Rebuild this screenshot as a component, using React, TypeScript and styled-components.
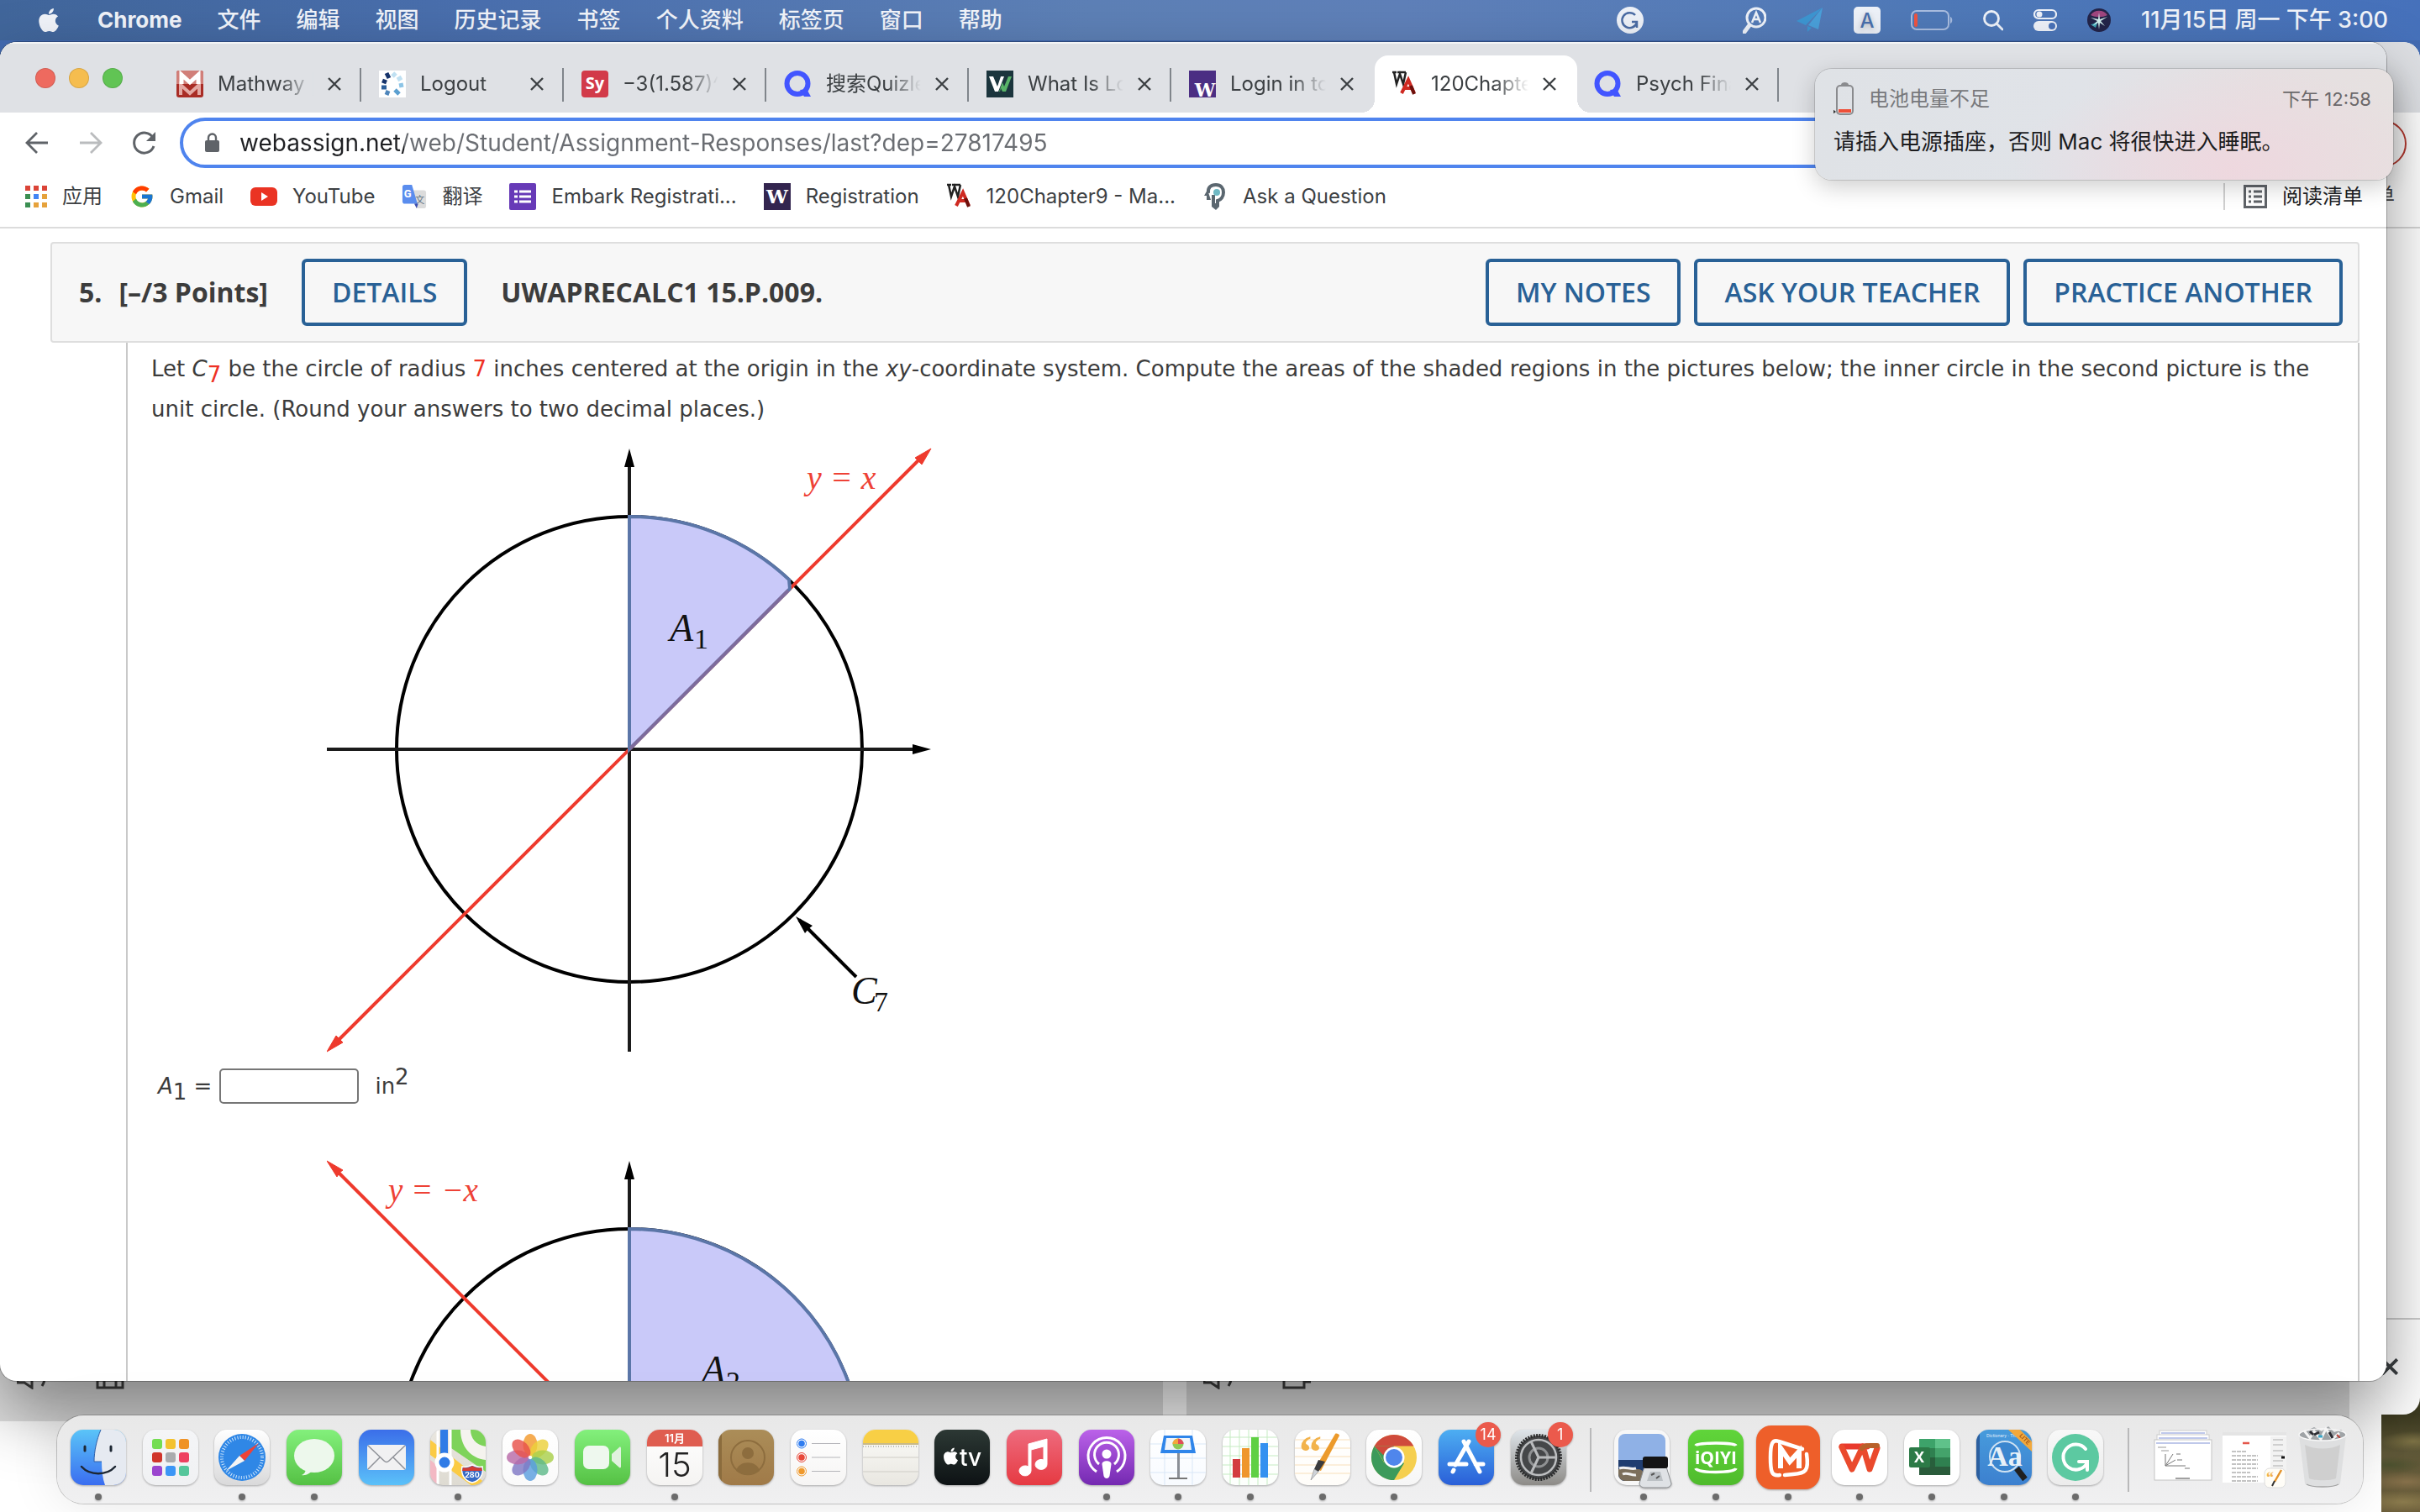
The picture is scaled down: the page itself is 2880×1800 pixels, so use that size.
import React from 'react';
import styled, { createGlobalStyle, css } from 'styled-components';
import { FaApple } from 'react-icons/fa';
import { FcGoogle } from 'react-icons/fc';

const UI = `Inter, "Noto Sans CJK SC", sans-serif`;
const READ = `"DejaVu Sans", "Noto Sans CJK SC", sans-serif`;
const HEAD = `"Open Sans", "Noto Sans CJK SC", sans-serif`;
const MATH = `"Liberation Serif", serif`;

const GlobalStyle = createGlobalStyle`
  * { box-sizing: border-box; }
  body { margin: 0; font-family: ${UI}; }
  button { font: inherit; color: inherit; background: none; border: 0; padding: 0; cursor: pointer; }
  a { color: inherit; text-decoration: none; }
  svg { display: block; flex: none; }
`;

/* ---------- desktop ---------- */

const Desktop = styled.div`
  position: relative;
  height: 100vh;
  overflow: hidden;
  background:
    radial-gradient(60px 14px at calc(100% - 20px) calc(100% - 12px), #8a7a4c, transparent),
    radial-gradient(40px 12px at calc(100% - 8px) calc(100% - 84px), #7d7245, transparent),
    radial-gradient(40px 10px at calc(100% - 36px) calc(100% - 56px), #4d5230, transparent),
    radial-gradient(50px 12px at calc(100% - 16px) calc(100% - 36px), #86704a, transparent),
    linear-gradient(#3f66ae 0, #4a76bd 200px, #3c3a20 calc(100% - 116px), #5f5838 calc(100% - 70px), #6a5c3a);
`;

const MenuBar = styled.nav`
  position: relative;
  height: 48px;
  display: flex;
  align-items: center;
  justify-content: space-between;
  padding: 0 38px 0 42px;
  color: #f1f4fa;
  font-size: 26px;
  line-height: 32px;
  font-weight: 500;
  text-shadow: 0 2px 6px rgba(0, 0, 0, 0.25);
  background: linear-gradient(90deg, #41669b, #4a6fae 20%, #5d80b6 45%, #5f80b9 58%, #4f79b8 80%, #4671bb);
`;

const MenuGroup = styled.div<{ $gap: number }>`
  display: flex;
  align-items: center;
  gap: ${(p) => p.$gap}px;
`;

const MenuItem = styled.button<{ $strong?: boolean }>`
  white-space: nowrap;
  font-weight: ${(p) => (p.$strong ? 700 : 500)};
`;
const Clock = styled.button`
  font-size: 27px;
  white-space: nowrap;
`;

const Spacer = styled.span`
  width: 46px;
`;

/* ---------- windows ---------- */

const BackWindow = styled.div`
  position: absolute;
  inset: 50px 0 116px 0;
  background: #fff;
  border-radius: 20px;
  overflow: hidden;
  display: flex;
  flex-direction: column;
`;
const BackTabs = styled.div`
  height: 84px;
  background: #dfe1e5;
`;
const BackTools = styled.div`
  height: 138px;
  display: flex;
  flex-direction: column;
  align-items: flex-end;
  gap: 18px;
  padding: 9px 16px 0;
  border-bottom: 2px solid #d5d5d5;
`;
const BackPill = styled.span`
  width: 120px;
  height: 56px;
  border: 2px solid #b83a30;
  border-radius: 28px;
`;
const BackText = styled.span`
  font-size: 24px;
  line-height: 32px;
  padding-right: 14px;
  color: #444;
`;
const BackFooter = styled.div`
  margin-top: auto;
  height: 115px;
  border-top: 2px solid #ccc;
  display: flex;
  justify-content: flex-end;
  padding: 46px 26px 0;
`;

const LowerWindow = styled.div`
  position: absolute;
  left: 0;
  right: 46px;
  bottom: 0;
  height: 600px;
  background: #fff;
  display: flex;
  align-items: flex-start;
  gap: 28px;
  padding-right: 38px;
`;
const LowerPanel = styled.div`
  flex: 1;
  height: 492px;
  background: #dfdfdf;
  display: flex;
  align-items: flex-end;
  gap: 60px;
  padding: 0 20px 38px;
`;

const BrowserWindow = styled.main`
  position: absolute;
  inset: 50px 40px 156px 0;
  background: #fff;
  border-radius: 20px;
  box-shadow: 0 0 0 1px rgba(0, 0, 0, 0.25), 0 36px 80px rgba(0, 0, 0, 0.42);
`;
const Clip = styled.div`
  height: 100%;
  border-radius: 20px;
  overflow: hidden;
  display: flex;
  flex-direction: column;
`;

const TabStrip = styled.div`
  flex: none;
  height: 84px;
  background: #dfe1e5;
  display: flex;
  align-items: flex-end;
  box-shadow: inset 0 2px 0 #f3f4f6;
`;
const Lights = styled.div`
  flex: none;
  width: 190px;
  height: 68px;
  display: flex;
  align-items: center;
  gap: 16px;
  padding: 0 0 14px 42px;
`;
const Light = styled.button<{ $c: string }>`
  width: 24px;
  height: 24px;
  border-radius: 50%;
  background: ${(p) => p.$c};
  box-shadow: inset 0 0 0 1px rgba(0, 0, 0, 0.12);
`;
const TabBox = styled.div<{ $active?: boolean; $line?: boolean }>`
  position: relative;
  flex: 0 1 241px;
  min-width: 0;
  height: 68px;
  display: flex;
  align-items: center;
  padding: 0 25px 0 20px;
  gap: 17px;
  font-size: 24px;
  line-height: 32px;
  color: #3c4043;
  background: linear-gradient(#80858b, #80858b) right 1px top 15px / ${(p) => (p.$line ? '2px 40px' : '0 0')} no-repeat;
  ${(p) =>
    p.$active &&
    css`
      background: #fff;
      border-radius: 16px 16px 0 0;
      &::before,
      &::after {
        content: '';
        position: absolute;
        bottom: 0;
        width: 16px;
        height: 16px;
      }
      &::before {
        right: 100%;
        background: radial-gradient(circle at 0 0, transparent 16px, #fff 16px);
      }
      &::after {
        left: 100%;
        background: radial-gradient(circle at 100% 0, transparent 16px, #fff 16px);
      }
    `}
`;
const TabTitle = styled.span`
  flex: 1;
  min-width: 0;
  overflow: hidden;
  white-space: nowrap;
  mask-image: linear-gradient(90deg, #000 65%, transparent);
`;

const Toolbar = styled.div`
  flex: none;
  height: 72px;
  display: flex;
  align-items: center;
  gap: 36px;
  padding: 0 130px 0 30px;
`;
const Omnibox = styled.label`
  flex: 1;
  height: 60px;
  margin-left: -8px;
  display: flex;
  align-items: center;
  gap: 24px;
  padding: 0 26px;
  border: 4px solid #4f84ee;
  border-radius: 30px;
`;
const UrlInput = styled.input`
  flex: 1;
  min-width: 0;
  border: 0;
  outline: 0;
  padding: 0;
  font-family: ${UI};
  font-size: 28px;
  line-height: 36px;
  height: 36px;
  color: #5f6368;
  background: linear-gradient(90deg, #202124 196px, #6a6d72 196px);
  background-clip: text;
  -webkit-text-fill-color: transparent;
`;

const Bookmarks = styled.div`
  flex: none;
  height: 66px;
  display: flex;
  align-items: center;
  justify-content: space-between;
  padding: 0 28px 8px 28px;
  border-bottom: 2px solid #dcdcdc;
  color: #3c4043;
  font-size: 24px;
  line-height: 32px;
`;
const BookmarkList = styled.div`
  display: flex;
  gap: 32px;
`;
const Bookmark = styled.a`
  display: flex;
  align-items: center;
  gap: 18px;
  white-space: nowrap;
`;
const ReadingList = styled.button`
  display: flex;
  align-items: center;
  gap: 18px;
  padding-left: 22px;
  border-left: 2px solid #d0d0d0;
  color: #202124;
`;

/* ---------- question ---------- */

const Question = styled.section`
  flex: none;
  margin: 16px 32px 0 60px;
  color: #3c3c3c;
`;
const QuestionBar = styled.header`
  height: 120px;
  display: flex;
  align-items: center;
  justify-content: space-between;
  padding: 0 18px 0 32px;
  background: #f7f7f7;
  border: 2px solid #dedede;
  border-radius: 4px;
  font-family: ${HEAD};
  font-size: 32px;
  line-height: 44px;
`;
const BarGroup = styled.div<{ $gap: number }>`
  display: flex;
  align-items: center;
  gap: ${(p) => p.$gap}px;
`;
const BarTitle = styled.h2`
  display: flex;
  gap: 20px;
  margin: 0;
  font-size: 32px;
  line-height: 44px;
  font-weight: 700;
`;
const Outline = styled.button`
  height: 80px;
  padding: 0 32px;
  border: 4px solid #296196;
  border-radius: 6px;
  color: #296196;
  font-weight: 600;
  white-space: nowrap;
`;
const QuestionBody = styled.div`
  margin-left: 90px;
  min-height: 1300px;
  padding: 7px 28px 0;
  border: solid #c9c9c9;
  border-width: 0 2px;
  font-family: ${READ};
  font-size: 26px;
  line-height: 48px;
`;
const Prompt = styled.p`
  margin: 0;
`;
const Red = styled.span`
  color: #ee3124;
`;
const Sub = styled.sub`
  font-size: 26px;
  line-height: 0;
  vertical-align: -7px;
`;
const Sup = styled.sup`
  font-size: 26px;
  line-height: 0;
  vertical-align: 11px;
`;
const Figure = styled.figure<{ $top: number }>`
  margin: ${(p) => p.$top}px 0 0 209px;
`;
const AnswerRow = styled.div`
  display: flex;
  align-items: center;
  gap: 9px;
  margin: 19px 0 0 8px;
  height: 42px;
`;
const AnswerInput = styled.input`
  width: 166px;
  height: 42px;
  border: 2px solid #767676;
  border-radius: 5px;
  padding: 2px 8px;
  font-family: ${READ};
  font-size: 26px;
`;
const Unit = styled.span`
  padding-left: 10px;
`;

/* ---------- notification ---------- */

const Notice = styled.aside`
  position: absolute;
  top: 82px;
  right: 32px;
  width: 688px;
  height: 132px;
  padding: 15px 26px 0 22px;
  border-radius: 20px;
  background:
    radial-gradient(260px 120px at 72% 90%, rgba(240, 214, 222, 0.8), transparent),
    linear-gradient(100deg, #dfe2e6, #e0e3e8 45%, #e6dfe1 75%, #e6e1e0);
  box-shadow: 0 0 0 1px rgba(0, 0, 0, 0.14), 0 8px 28px rgba(0, 0, 0, 0.2);
`;
const NoticeHead = styled.div`
  display: flex;
  align-items: center;
  gap: 18px;
  height: 42px;
  font-size: 24px;
  line-height: 32px;
  color: #77787b;
`;
const NoticeTime = styled.time`
  margin-left: auto;
  font-size: 22px;
  color: #6b686a;
`;
const NoticeText = styled.p`
  margin: 12px 0 0;
  font-size: 26px;
  line-height: 36px;
  color: #1c1c1e;
  white-space: nowrap;
`;

/* ---------- dock ---------- */

const DockBar = styled.nav`
  position: absolute;
  left: 68px;
  right: 68px;
  bottom: 10px;
  height: 105px;
  display: flex;
  justify-content: space-between;
  align-items: flex-start;
  padding: 17px 18px 0 16px;
  border-radius: 32px;
  background: linear-gradient(#e8e8e8, #f0f0f1);
  box-shadow: 0 0 0 1px rgba(0, 0, 0, 0.2), 0 0 60px rgba(0, 0, 0, 0.1);
`;
const DockItem = styled.button<{ $on?: boolean }>`
  position: relative;
  width: 66px;
  height: 84px;
  display: flex;
  flex-direction: column;
  align-items: center;
  justify-content: space-between;
  filter: drop-shadow(0 1px 1px rgba(0, 0, 0, 0.3));
  &::after {
    content: '';
    width: 8px;
    height: 8px;
    border-radius: 50%;
    background: ${(p) => (p.$on ? '#6b6b6b' : 'transparent')};
  }
`;
const Badge = styled.span`
  position: absolute;
  top: -9px;
  right: -8px;
  width: 30px;
  height: 30px;
  border-radius: 50%;
  background: #eb5a4c;
  color: #fff;
  font-size: 18px;
  line-height: 30px;
  text-align: center;
`;
const DockLine = styled.span`
  width: 2px;
  height: 76px;
  margin: -2px 9px 0;
  background: #b9b9ba;
`;
const DockFiles = styled.div`
  display: flex;
  gap: 12px;
`;

/* ---------- drawings ---------- */

const Close = ({ s = 16, w = 2.4 }: { s?: number; w?: number }) => (
  <svg width={s} height={s} viewBox="0 0 16 16" stroke="#3c4043" strokeWidth={w} fill="none">
    <path d="M1 1l14 14M15 1L1 15" />
  </svg>
);

const QuizletMark = () => (
  <svg width="33" height="32" viewBox="0 0 33 32">
    <circle cx="16" cy="15.500" r="12.500" fill="none" stroke="#4255ff" strokeWidth="6" />
    <path d="M19 23l8-1 5 9h-8z" fill="#4255ff" />
  </svg>
);

const WAMark = () => (
  <svg width="30" height="32" viewBox="0 0 30 32">
    <path d="M1 2h5M7 2h5M12 2h5M3 2l3 14L10 4l4 12L17 2" fill="none" stroke="#222" strokeWidth="2.500" />
    <path d="M12 27l8-16 7 16M14 21h10" fill="none" stroke="#cf2a22" strokeWidth="4" />
    <path d="M23 18l4 10" stroke="#6e100c" strokeWidth="4" />
  </svg>
);

const tabIcons: Record<string, React.ReactNode> = {
  mathway: (
    <svg width="32" height="32" viewBox="0 0 32 32">
      <rect width="32" height="32" rx="3" fill="#a92c25" />
      <path d="M0 3a3 3 0 013-3h26a3 3 0 013 3v13H0z" fill="#d17f79" />
      <path d="M5 29V17l11 10 11-10v12" fill="none" stroke="#e4a9a4" strokeWidth="4" />
      <path d="M6 16V5l10 9 10-9v11" fill="none" stroke="#fff" strokeWidth="5" />
    </svg>
  ),
  logout: (
    <svg width="32" height="32" viewBox="0 0 32 32">
      <rect width="32" height="32" fill="#fff" />
      <g fill="none" strokeWidth="5">
        <path d="M16 7l4-4" stroke="#bfe0f2" />
        <path d="M22 11l5-3" stroke="#bfe0f2" />
        <path d="M24 18l5-1" stroke="#8cc4e6" />
        <path d="M19 23l5 5" stroke="#5a9fd0" />
        <path d="M11 24l-2 5" stroke="#4f86bb" />
        <path d="M3 20h6" stroke="#2c5f9b" />
        <path d="M4 12l5 2" stroke="#16336b" />
        <path d="M9 3l3 6" stroke="#16336b" />
      </g>
    </svg>
  ),
  sy: (
    <svg width="32" height="32" viewBox="0 0 32 32">
      <rect width="32" height="32" rx="4" fill="#d23a49" />
      <text x="16" y="22" textAnchor="middle" fontFamily="Open Sans, sans-serif" fontSize="20" fontWeight="700" fill="#fff">Sy</text>
    </svg>
  ),
  quizlet: <QuizletMark />,
  w: (
    <svg width="32" height="32" viewBox="0 0 32 32">
      <rect width="32" height="32" fill="#1b353d" />
      <path d="M3 7h5l5 12 4-12h4l-7 18h-4z" fill="#fff" />
      <path d="M15 25l4-11 2 5 5-12h4l-7 18h-4l-2-4-1 4z" fill="#58b368" />
    </svg>
  ),
  uw: (
    <svg width="32" height="32" viewBox="0 0 32 32">
      <rect width="32" height="32" fill="#4b2e83" />
      <text x="19" y="31" textAnchor="middle" fontFamily="DejaVu Serif, serif" fontSize="22" fontWeight="700" fill="#fff">W</text>
    </svg>
  ),
  wa: <WAMark />,
};

const tabs: { icon: string; title: string; active?: boolean; line?: boolean }[] = [
  { icon: 'mathway', title: 'Mathway |', line: true },
  { icon: 'logout', title: 'Logout', line: true },
  { icon: 'sy', title: '−3(1.587)^', line: true },
  { icon: 'quizlet', title: '搜索Quizle', line: true },
  { icon: 'w', title: 'What Is Lo', line: true },
  { icon: 'uw', title: 'Login in to' },
  { icon: 'wa', title: '120Chapte', active: true },
  { icon: 'quizlet', title: 'Psych Fina', line: true },
];

const bookmarks: { title: string; icon: React.ReactNode }[] = [
  {
    title: '应用',
    icon: (
      <svg width="28" height="28" viewBox="0 0 28 28">
        {['#db4437', '#db4437', '#db4437', '#3b8f52', '#4285f4', '#e6a23c', '#3b8f52', '#e6a23c', '#e6a23c'].map((c, i) => (
          <rect key={i} x={2 + (i % 3) * 10} y={1 + Math.floor(i / 3) * 10} width="6" height="6" fill={c} />
        ))}
      </svg>
    ),
  },
  { title: 'Gmail', icon: <FcGoogle size={30} /> },
  {
    title: 'YouTube',
    icon: (
      <svg width="32" height="32" viewBox="0 0 32 32">
        <rect y="5" width="32" height="22" rx="6" fill="#ea3323" />
        <path d="M13 11v10l8-5z" fill="#fff" />
      </svg>
    ),
  },
  {
    title: '翻译',
    icon: (
      <svg width="30" height="32" viewBox="0 0 32 32">
        <path d="M14 8h14a3 3 0 013 3v17a3 3 0 01-3 3H19z" fill="#dcdcdc" />
        <text x="17" y="25" fontFamily="Noto Sans CJK SC, sans-serif" fontSize="12" fill="#5c7080">文</text>
        <path d="M4 1h9l7 24H4a3 3 0 01-3-3V4a3 3 0 013-3z" fill="#5a8dee" />
        <path d="M16 25h5l-2 6z" fill="#3d4fb0" />
        <text x="3" y="17" fontFamily="Roboto, sans-serif" fontSize="14" fontWeight="700" fill="#fff">G</text>
      </svg>
    ),
  },
  {
    title: 'Embark Registrati...',
    icon: (
      <svg width="32" height="32" viewBox="0 0 32 32">
        <rect width="32" height="32" rx="2" fill="#673ab7" />
        <path d="M6 10h4M6 16h4M6 22h4M12 10h14M12 16h14M12 22h14" stroke="#fff" strokeWidth="3" />
      </svg>
    ),
  },
  {
    title: 'Registration',
    icon: (
      <svg width="32" height="32" viewBox="0 0 32 32">
        <rect width="32" height="32" fill="#33254f" />
        <text x="16" y="24" textAnchor="middle" fontFamily="DejaVu Serif, serif" fontSize="23" fontWeight="700" fill="#fff">W</text>
      </svg>
    ),
  },
  { title: '120Chapter9 - Ma...', icon: <WAMark /> },
  {
    title: 'Ask a Question',
    icon: (
      <svg width="30" height="32" viewBox="0 0 30 32">
        <path d="M7 12C6 5 10 2 16 2c6 0 9 4 9 9s-3 9-7 10v5h-5V14" fill="none" stroke="#5b6770" strokeWidth="4" />
        <circle cx="17" cy="11" r="4" fill="#6fb9c4" />
        <path d="M6 8l-4 7h3v5h5z" fill="#5b6770" />
        <path d="M11 28h9l-4 4z" fill="#5b6770" />
      </svg>
    ),
  },
];

const Graph = ({ second }: { second?: boolean }) => (
  <svg width="720" height="720" viewBox="0 0 720 720" role="img" aria-label={second ? 'Shaded region A2' : 'Shaded region A1'}>
    <circle cx="360" cy="359" r="277" fill="none" stroke="#000" strokeWidth="4" />
    <g stroke="#1b1b1b" strokeWidth="4" fill="#000">
      <path d="M0 359H706M360 14V719" />
      <path d="M719 359l-22-6v12zM360 1l-6 22h12z" stroke="none" />
    </g>
    {second ? (
      <>
        <path d="M8 9L710 711" stroke="#ee3a2d" strokeWidth="4" />
        <path d="M0 1l19 11-4 3-3 5z" fill="#ee3a2d" stroke="#ee3a2d" />
        <path d="M360 359V82A277 277 0 01556 555z" fill="#c9c9f9" stroke="#5b76a8" strokeWidth="4" />
        <text x="73" y="49" fontFamily={MATH} fontStyle="italic" fontSize="39" fill="#ee4236">y = −x</text>
        <text x="446" y="265" fontFamily={MATH} fontStyle="italic" fontSize="46" fill="#111">A</text>
        <text x="475" y="275" fontFamily={MATH} fontSize="34" fill="#111">2</text>
      </>
    ) : (
      <>
        <path d="M8 711L711 8" stroke="#ee3a2d" strokeWidth="4" />
        <path d="M719 1l-19 11 4 4 4 4zM0 719l11-19 4 4 4 4z" fill="#ee3a2d" stroke="#ee3a2d" />
        <path d="M360 359V82A277 277 0 01550 157L551 168z" fill="#c9c9f9" stroke="#5b76a8" strokeWidth="4" />
        <path d="M361 358L549 170" stroke="#7d6b9c" strokeWidth="4" />
        <path d="M562 562L630 630" stroke="#000" strokeWidth="4" />
        <path d="M558 558l20 11-5 4-4 5z" fill="#000" />
        <text x="571" y="49" fontFamily={MATH} fontStyle="italic" fontSize="40" fill="#ee4236">y = x</text>
        <text x="408" y="230" fontFamily={MATH} fontStyle="italic" fontSize="46" fill="#111">A</text>
        <text x="437" y="239" fontFamily={MATH} fontSize="34" fill="#111">1</text>
        <text x="624" y="662" fontFamily={MATH} fontStyle="italic" fontSize="46" fill="#111">C</text>
        <text x="651" y="671" fontFamily={MATH} fontSize="34" fill="#111">7</text>
      </>
    )}
  </svg>
);

const Tile = ({ id, from, to, children }: { id: string; from: string; to: string; children?: React.ReactNode }) => (
  <svg width="66" height="66" viewBox="0 0 66 66">
    <defs>
      <linearGradient id={`g-${id}`} x1="0" y1="0" x2="0" y2="1">
        <stop offset="0" stopColor={from} />
        <stop offset="1" stopColor={to} />
      </linearGradient>
      <clipPath id={`c-${id}`}>
        <rect width="66" height="66" rx="15" />
      </clipPath>
    </defs>
    <g clipPath={`url(#c-${id})`}>
      <rect width="66" height="66" fill={`url(#g-${id})`} />
      {children}
    </g>
  </svg>
);

type DockApp = { name: string; on?: boolean; badge?: string; art: React.ReactNode };

const apps: DockApp[] = [
  {
    name: 'Finder', on: true,
    art: (
      <Tile id="finder" from="#5ac4f8" to="#3a6df0">
        <path d="M36 0c-5 12-8 26-8 38h9c0 10 1 20 4 28h25V0z" fill="#e6eaf1" />
        <path d="M36 0c-5 12-8 26-8 38h9" fill="none" stroke="#2f5fa8" strokeWidth="1" />
        <path d="M17 20v5M48 20v5" stroke="#1d2733" strokeWidth="3" strokeLinecap="round" />
        <path d="M13 44c10 11 30 11 40 0" fill="none" stroke="#1d2733" strokeWidth="2.500" strokeLinecap="round" />
      </Tile>
    ),
  },
  {
    name: 'Launchpad',
    art: (
      <Tile id="launch" from="#f4f5f7" to="#f0f1f3">
        {['#74dd52', '#f3c22f', '#ef9327', '#d0352b', '#a9abae', '#ee4060', '#9b45cf', '#3c96f6', '#56c69b'].map((c, i) => (
          <rect key={i} x={11 + (i % 3) * 16} y={11 + Math.floor(i / 3) * 16} width="12" height="12" rx="3" fill={c} />
        ))}
      </Tile>
    ),
  },
  {
    name: 'Safari', on: true,
    art: (
      <Tile id="safari" from="#ffffff" to="#d9d9da">
        <circle cx="33" cy="33" r="28" fill="#2f87e6" />
        <circle cx="33" cy="33" r="24" fill="none" stroke="#cfe6fb" strokeWidth="4" strokeDasharray="1 2.140" />
        <path d="M53 16L36 37l-6-6z" fill="#ee4238" />
        <path d="M14 49l16-18 6 6z" fill="#f4f4f4" />
      </Tile>
    ),
  },
  {
    name: 'Messages', on: true,
    art: (
      <Tile id="msg" from="#83f07c" to="#55c144">
        <ellipse cx="33" cy="31" rx="24" ry="20" fill="#edf8ec" />
        <path d="M23 46c0 4-2 7-5 8 5 1 10-2 12-5z" fill="#edf8ec" />
      </Tile>
    ),
  },
  {
    name: 'Mail',
    art: (
      <Tile id="mail" from="#3b6ee9" to="#5bc1f9">
        <rect x="10" y="18" width="46" height="30" rx="3" fill="#f1f1f2" />
        <path d="M11 19l19 18c2 2 4 2 6 0l19-18M11 47l14-14M55 47L41 33" fill="none" stroke="#8f9298" strokeWidth="1.500" />
      </Tile>
    ),
  },
  {
    name: 'Maps', on: true,
    art: (
      <Tile id="maps" from="#e9e6df" to="#dedbd2">
        <path d="M25 0h41v50L25 22z" fill="#7ed35a" />
        <path d="M36 0c0 20 12 34 30 36V20C54 18 48 10 48 0z" fill="#f5f3ee" />
        <path d="M0 12l66 52v6H54L0 30z" fill="#fbcb44" />
        <path d="M0 36l10 8v22H0z" fill="#f3b9c4" />
        <path d="M9 0v66M24 0v66" stroke="#fff" strokeWidth="3" />
        <rect x="12" width="9" height="36" fill="#2f7be6" />
        <circle cx="17" cy="39" r="9" fill="#2f7be6" stroke="#fff" strokeWidth="5" />
        <path d="M38 44c4 1 8 0 12-2 4 2 8 3 12 2 2 9-3 17-12 19-9-2-14-10-12-19z" fill="#3669c4" stroke="#fff" strokeWidth="1.500" />
        <path d="M39 45c4 1 8 0 11-2 3 2 7 3 11 2l1 4H38z" fill="#d23b34" />
        <text x="50" y="57" textAnchor="middle" fontFamily={UI} fontSize="9" fontWeight="700" fill="#fff">280</text>
      </Tile>
    ),
  },
  {
    name: 'Photos',
    art: (
      <Tile id="photos" from="#ffffff" to="#fafafa">
        {['#f39a2d', '#ecd13a', '#a9cf4a', '#5fb98a', '#5a9ede', '#7f77c4', '#b86aa8', '#e8524a'].map((c, i) => (
          <ellipse key={i} cx="33" cy="18" rx="8.500" ry="13" fill={c} opacity="0.82" transform={`rotate(${i * 45} 33 33)`} />
        ))}
      </Tile>
    ),
  },
  {
    name: 'FaceTime',
    art: (
      <Tile id="ft" from="#83f07c" to="#55c144">
        <rect x="10" y="19" width="31" height="28" rx="7" fill="#eef8ee" />
        <path d="M44 29l9-8c1-1 2 0 2 1v22c0 1-1 2-2 1l-9-8z" fill="#e0f2de" />
      </Tile>
    ),
  },
  {
    name: 'Calendar', on: true,
    art: (
      <Tile id="cal" from="#ffffff" to="#f5f4f2">
        <rect width="66" height="20" fill="#df5d50" />
        <text x="33" y="15" textAnchor="middle" fontFamily={UI} fontSize="13" fontWeight="600" fill="#fff">11月</text>
        <text x="33" y="56" textAnchor="middle" fontFamily={UI} fontSize="40" fontWeight="300" fill="#222">15</text>
      </Tile>
    ),
  },
  {
    name: 'Contacts',
    art: (
      <Tile id="contacts" from="#ab8d58" to="#a07a48">
        <rect width="4" height="66" fill="#8b6c3d" />
        <g fill="#8d6d3e">
          <circle cx="35" cy="28" r="7" />
          <path d="M21 49c3-13 25-13 28 0-8 7-20 7-28 0z" />
          <circle cx="35" cy="33" r="20" fill="none" stroke="#8d6d3e" strokeWidth="2" />
        </g>
      </Tile>
    ),
  },
  {
    name: 'Reminders',
    art: (
      <Tile id="rem" from="#ffffff" to="#f6f5f4">
        {['#2f7cf0', '#e8483a', '#f0992b'].map((c, i) => (
          <g key={c}>
            <circle cx="13" cy={16.5 + i * 16.5} r="3.800" fill={c} />
            <circle cx="13" cy={16.5 + i * 16.5} r="5.500" fill="none" stroke={c} strokeWidth="1" />
            <path d={`M25 ${16.5 + i * 16.5}H59`} stroke="#b5b5ba" strokeWidth="1.200" />
          </g>
        ))}
      </Tile>
    ),
  },
  {
    name: 'Notes',
    art: (
      <Tile id="notes" from="#fbfbf8" to="#e9e7e1">
        <rect width="66" height="16" fill="#f8cf45" />
        <path d="M0 17h66" stroke="#b9a564" strokeWidth="1.500" />
        <path d="M0 20h66" stroke="#bdbdb8" strokeWidth="2" strokeDasharray="1 2" />
        <path d="M0 33h66M0 50h66" stroke="#cfcdc6" />
      </Tile>
    ),
  },
  {
    name: 'TV',
    art: (
      <Tile id="tv" from="#2c3834" to="#0d1214">
        <FaApple x="8" y="20" size={23} color="#fff" />
        <text x="30" y="43" fontFamily={UI} fontSize="28" fontWeight="500" fill="#fff">tv</text>
      </Tile>
    ),
  },
  {
    name: 'Music',
    art: (
      <Tile id="music" from="#ee6b7e" to="#e63a42">
        <path d="M26 17l22-6v30a7 6 0 11-4-5V20l-15 4v25a7 6 0 11-3-5z" fill="#fff" stroke="#fff" strokeLinejoin="round" />
      </Tile>
    ),
  },
  {
    name: 'Podcasts', on: true,
    art: (
      <Tile id="pod" from="#bb62e9" to="#7429b1">
        <g fill="none" stroke="#fff" strokeWidth="3">
          <path d="M21 50a22 22 0 1124 0" />
          <path d="M24 41a14.500 14.500 0 1118 0" />
        </g>
        <circle cx="33" cy="29" r="5.500" fill="#fff" />
        <path d="M27.500 41c0-5 11-5 11 0l-2 14c-1 4-6 4-7 0z" fill="#fff" />
      </Tile>
    ),
  },
  {
    name: 'Keynote', on: true,
    art: (
      <Tile id="key" from="#ffffff" to="#f8fbff">
        <path d="M0 17h66M0 34h66M0 51h66M17 0v66M50 0v66" stroke="#d9e7f7" />
        <path d="M32 28h3v30h-3z" fill="#8b8f96" />
        <path d="M22 57h22v2H22z" fill="#777" />
        <path d="M16 7h34l4 21H12z" fill="#2f85ea" />
        <path d="M19 10h28l2 14H17z" fill="#f0f4fa" />
        <circle cx="33" cy="17" r="6.500" fill="#8fc956" />
        <path d="M33 17v-6.500a6.500 6.500 0 016.500 6.500z" fill="#e14c59" />
        <path d="M33 17l-6.500 0a6.500 6.500 0 016.500-6.500z" fill="#f4a63b" />
      </Tile>
    ),
  },
  {
    name: 'Numbers', on: true,
    art: (
      <Tile id="num" from="#ffffff" to="#fcfffc">
        <path d="M0 9h66M0 20h66M0 31h66M0 42h66M0 53h66M9 0v66M20 0v66M31 0v66M42 0v66M53 0v66" stroke="#c5ecc2" />
        <rect x="12" y="35" width="9" height="22" fill="#d33c40" />
        <rect x="23" y="22" width="9" height="35" fill="#ef962c" />
        <rect x="34" y="9" width="9" height="48" fill="#5fd044" />
        <rect x="45" y="16" width="9" height="41" fill="#3391f0" />
      </Tile>
    ),
  },
  {
    name: 'Pages', on: true,
    art: (
      <Tile id="pages" from="#ffffff" to="#fffdf9">
        <path d="M0 12h66M0 22h66M0 32h66M0 42h66M0 52h66" stroke="#f8dfb9" />
        <text x="5" y="45" fontFamily="Liberation Serif, serif" fontSize="54" fontWeight="700" fill="#f2b34c">“</text>
        <path d="M48 5c1-1 5 0 5 2L31 49l-7-3z" fill="#ec9a2b" />
        <path d="M28 36l-5 11 5 3 8-12z" fill="#3b3b3d" />
        <path d="M23 47l-4 13 9-10z" fill="#cfd3d8" stroke="#777" strokeWidth="0.500" />
      </Tile>
    ),
  },
  {
    name: 'Chrome', on: true,
    art: (
      <Tile id="chrome" from="#ffffff" to="#f6f6f6">
        <circle cx="33" cy="33" r="27" fill="#f5cf4f" />
        <path d="M9.600 19.500A27 27 0 0156.400 19.500H33z" fill="#cf4a3c" />
        <path d="M9.600 19.500A27 27 0 0033 60l12-20-12-7-12 6z" fill="#3c9a5b" />
        <path d="M9.600 19.500L22 40l11-20.500z" fill="#3c9a5b" />
        <path d="M9.600 19.500L20 30l13-10.500z" fill="#cf4a3c" />
        <circle cx="33" cy="33" r="12.500" fill="#fff" />
        <circle cx="33" cy="33" r="10" fill="#4f86ec" />
      </Tile>
    ),
  },
  {
    name: 'App Store', badge: '14',
    art: (
      <Tile id="store" from="#4daef2" to="#2a5fd8">
        <g stroke="#fff" strokeWidth="5" strokeLinecap="round">
          <path d="M36 14L20 42M30 14L49 50M13 41H33M44 41H53M18 48l-1 2" />
        </g>
      </Tile>
    ),
  },
  {
    name: 'System Preferences', badge: '1',
    art: (
      <Tile id="prefs" from="#dfe5ea" to="#8d8b87">
        <circle cx="33" cy="33" r="26" fill="#454749" stroke="#2c2d2e" strokeWidth="4" strokeDasharray="2 1.300" />
        <circle cx="33" cy="33" r="21" fill="none" stroke="#bcbec0" strokeWidth="2.500" />
        <circle cx="33" cy="33" r="11" fill="none" stroke="#8f9193" strokeWidth="3" />
        <path d="M33 33L24 14M33 33h21M33 33L24 52" stroke="#b9bbbd" strokeWidth="3" />
      </Tile>
    ),
  },
];

const moreApps: DockApp[] = [
  {
    name: 'Preview', on: true,
    art: (
      <svg width="70" height="70" viewBox="0 0 70 70">
        <rect width="66" height="66" rx="15" fill="#f7f7f7" />
        <rect x="5" y="5" width="56" height="56" rx="8" fill="#8fb1e6" />
        <path d="M5 36h56v17a8 8 0 01-8 8H13a8 8 0 01-8-8z" fill="#1f3d70" />
        <path d="M5 47c8-4 14 1 22 0s10 6 8 14H13a8 8 0 01-8-8z" fill="#7c6f5c" />
        <path d="M6 46c7-3 13 2 20 0M10 53c6-3 10 2 16 1" stroke="#f1f1f1" strokeWidth="3" fill="none" />
        <path d="M36 44h26l6 20c0 3-3 5-7 5H37c-4 0-7-2-7-5z" fill="#dfe2e5" stroke="#8a8d90" />
        <path d="M43 50h12l3 11H39z" fill="#bcc1c5" />
        <path d="M44 54l4-2M50 58l4-3" stroke="#555" strokeWidth="2" />
        <rect x="34" y="32" width="30" height="14" rx="3" fill="#141414" />
      </svg>
    ),
  },
  {
    name: 'iQIYI', on: true,
    art: (
      <Tile id="iqiyi" from="#60d53a" to="#4fbb2c">
        <path d="M9 19c2-4 46-4 48 0M9 46c2 6 46 6 48 0" fill="none" stroke="#fff" strokeWidth="3.500" />
        <text x="33" y="41" textAnchor="middle" fontFamily="Open Sans, sans-serif" fontSize="21" fontWeight="700" fill="#fff">iQIYI</text>
      </Tile>
    ),
  },
  {
    name: 'Mango TV', on: true,
    art: (
      <svg width="76" height="66" viewBox="0 0 76 66" overflow="visible">
        <rect y="-5" width="76" height="76" rx="18" fill="#ee5f2a" />
        <path d="M28 54c-10 2-11-5-11-21s2-22 10-19l28 9M60 29c3 20-1 23-16 24l-10 1" fill="none" stroke="#fff" strokeWidth="4.500" strokeLinecap="round" />
        <path d="M29 46V22l11 16 11-12v20" fill="none" stroke="#fff" strokeWidth="6" />
      </svg>
    ),
  },
  {
    name: 'WPS', on: true,
    art: (
      <Tile id="wps" from="#ffffff" to="#ffffff">
        <path d="M12 20h30" stroke="#e9392c" strokeWidth="7" strokeLinecap="round" />
        <path d="M12 21l12 26L37 20l8 27 9-25" fill="none" stroke="#ea4a2d" strokeWidth="7" strokeLinejoin="round" strokeLinecap="round" />
        <path d="M36 22c3-4 8-3 18-3" fill="none" stroke="#b8612a" strokeWidth="6" strokeLinecap="round" />
      </Tile>
    ),
  },
  {
    name: 'Excel', on: true,
    art: (
      <Tile id="xl" from="#ffffff" to="#ffffff">
        <path d="M18 11h19v11H18z" fill="#3da36a" />
        <path d="M37 11h18v11H37z" fill="#5fc28a" />
        <path d="M18 22h19v11H18z" fill="#2f8050" />
        <path d="M37 22h18v11H37z" fill="#44a36b" />
        <path d="M18 33h19v11H18z" fill="#285f3c" />
        <path d="M37 33h18v11H37z" fill="#2f8050" />
        <path d="M18 44h37v10H18z" fill="#2a5b3b" />
        <rect x="6" y="21" width="25" height="24" rx="2" fill="#2c7a47" />
        <text x="18" y="39" textAnchor="middle" fontFamily="Open Sans, sans-serif" fontSize="18" fontWeight="700" fill="#fff">X</text>
      </Tile>
    ),
  },
  {
    name: 'Dictionary', on: true,
    art: (
      <Tile id="dict" from="#479bdc" to="#3c80cf">
        <rect width="4" height="66" fill="#2c5f9f" />
        <text x="12" y="9" fontFamily={UI} fontSize="5" fill="#e4f0fb">Dictionary · Thes</text>
        <circle cx="34" cy="32" r="18" fill="#3b86cf" stroke="#cfe2f2" strokeWidth="2" />
        <text x="34" y="43" textAnchor="middle" fontFamily="Liberation Serif, serif" fontSize="34" fontWeight="700" fill="#e8f1f8">Aa</text>
        <path d="M48 46l10 13" stroke="#202020" strokeWidth="7" />
        <path d="M38 0h14l14 14v12z" fill="#f2a83b" />
        <text x="56" y="13" textAnchor="middle" transform="rotate(45 56 13)" fontFamily={UI} fontSize="7" fontWeight="700" fill="#a4591c">LITE</text>
      </Tile>
    ),
  },
  {
    name: 'Grammarly', on: true,
    art: (
      <Tile id="gram" from="#f8f8f8" to="#ececec">
        <circle cx="33" cy="33" r="28" fill="#5cc9a1" />
        <path d="M45 23A15 15 0 1047 39M37 38h10v10" fill="none" stroke="#fff" strokeWidth="4" strokeLinecap="round" />
      </Tile>
    ),
  },
];

const WindowStack = () => (
  <svg width="70" height="66" viewBox="0 0 70 66">
    <rect x="7" y="1" width="56" height="40" fill="#fff" stroke="#ccc" />
    <path d="M9 4h52" stroke="#bfc8ea" strokeWidth="2" />
    <rect x="4" y="6" width="62" height="44" fill="#fff" stroke="#ccc" />
    <path d="M6 10h58" stroke="#bfc8ea" strokeWidth="2" />
    <rect x="1" y="12" width="68" height="48" fill="#fff" stroke="#c4c4c4" />
    <path d="M3 16h64" stroke="#bfc8ea" strokeWidth="2" />
    <path d="M5 21h10M9 25h9" stroke="#999" />
    <path d="M14 29v14h24M14 43l9-14M14 43l12-7" fill="none" stroke="#777" />
    <path d="M27 29h5M28 36h6M37 46h6" stroke="#777" />
    <path d="M26 58h17" stroke="#444" />
  </svg>
);
const PagesStack = () => (
  <svg width="77" height="70" viewBox="0 0 77 70">
    <rect y="3" width="76" height="60" fill="#fff" />
    <path d="M0 5h76" stroke="#e4e4e4" strokeWidth="4" />
    <path d="M57 8h19v55H57z" fill="#f2f2f2" />
    <path d="M24 16h8" stroke="#e4574b" strokeWidth="2.500" />
    <path d="M11 26h17M11 31h31M11 36h31M11 41h31M11 46h31M11 51h22M11 56h31M11 61h31" stroke="#888" strokeDasharray="5 1" />
    <path d="M60 12h12M60 18h12M60 25h12M60 31h12M60 37h12M60 43h12" stroke="#c4c4c4" strokeWidth="1.500" />
    <path d="M70 33h4" stroke="#111" strokeWidth="3" />
    <rect x="50" y="46" width="25" height="23" rx="6" fill="#fffdf7" stroke="#ddd" />
    <text x="52" y="63" fontFamily="Liberation Serif, serif" fontSize="18" fontWeight="700" fill="#f2b34c">“</text>
    <path d="M70 48L62 62" stroke="#e3922b" strokeWidth="2.500" />
    <path d="M62 61l-3 6" stroke="#333" strokeWidth="2" />
  </svg>
);
const Trash = () => (
  <svg width="60" height="76" viewBox="0 8 60 76" overflow="visible">
    <path d="M2 10l7 58c1 5 41 5 42 0l7-58z" fill="#dedfe0" transform="translate(0 4)" />
    <path d="M9 26l5 40c5 3 27 3 32 0l5-40c-12 6-30 6-42 0z" fill="#cfcfcf" />
    <path d="M2 14c2 9 54 9 56 0l-6-6-8 3-7-7-8 6-9-5-8 4-4 0z" fill="#9fa3a6" />
    <path d="M8 9l7 9 5-8 8 9 6-12 8 12 8-7" fill="none" stroke="#f4f4f4" strokeWidth="3" />
    <path d="M20 14l6-3M38 11l4 7M15 10l4 4" stroke="#2d2d33" strokeWidth="3" />
    <path d="M25 16h5" stroke="#3aa7c9" strokeWidth="3" />
    <path d="M47 14l4 4" stroke="#b7443c" strokeWidth="2" />
    <ellipse cx="30" cy="14" rx="28" ry="7" fill="none" stroke="#f7f7f7" strokeWidth="1.500" />
    <path d="M11 73c6 4 32 4 38 0" fill="none" stroke="#a4a4a4" strokeWidth="1.500" />
  </svg>
);

const Speaker = () => (
  <svg width="34" height="36" viewBox="0 0 34 36" fill="none" stroke="#3f3f3f" strokeWidth="3">
    <path d="M1 9v19h8l9 6V2L9 9z" />
    <path d="M30 32c5-8 5-18 0-26" />
  </svg>
);
const Film = () => (
  <svg width="34" height="36" viewBox="0 0 34 36" fill="none" stroke="#3f3f3f" strokeWidth="3">
    <path d="M2 4h30v30H2zM2 25h30M10 25v9M24 25v9" />
  </svg>
);
const Pip = () => (
  <svg width="34" height="36" viewBox="0 0 34 36" fill="none" stroke="#3f3f3f" strokeWidth="3">
    <path d="M2 4v30h24v-7h7V4z" />
  </svg>
);

const Dock = () => {
  const item = (a: DockApp) => (
    <DockItem key={a.name} $on={a.on} aria-label={a.name}>
      {a.art}
      {a.badge && <Badge>{a.badge}</Badge>}
    </DockItem>
  );
  return (
    <DockBar aria-label="Dock">
      {apps.map(item)}
      <DockLine />
      {moreApps.map(item)}
      <DockLine />
      <DockFiles>
        <WindowStack />
        <PagesStack />
        <Trash />
      </DockFiles>
    </DockBar>
  );
};

const StatusIcons = () => (
  <>
    <svg width="32" height="32" viewBox="0 0 32 32">
      <circle cx="16" cy="16" r="16" fill="#eef2f9" />
      <path d="M22 10A9 9 0 1024 19M18 18h6v7" fill="none" stroke="#4c6da5" strokeWidth="2.500" />
    </svg>
    <Spacer />
    <svg width="28" height="32" viewBox="0 0 28 32" fill="none" stroke="#eef2f9">
      <circle cx="16" cy="13" r="11" strokeWidth="3" />
      <path d="M8 22l-6 8" strokeWidth="5" strokeLinecap="round" />
      <path d="M11 19l5-12 5 12M13 15h6" strokeWidth="2.500" />
    </svg>
    <svg width="32" height="32" viewBox="0 0 32 32" fill="#3d96d2">
      <path d="M31 1L0 17l11 5z" />
      <path d="M31 1L14 22l12 5z" fill="#4aa0da" />
      <path d="M13 23l5 2-5 5z" />
    </svg>
    <svg width="32" height="32" viewBox="0 0 32 32">
      <rect width="32" height="32" rx="5" fill="#eef2f9" />
      <text x="16" y="25" textAnchor="middle" fontFamily={UI} fontSize="24" fill="#4970ad">A</text>
    </svg>
    <svg width="50" height="26" viewBox="0 0 50 26">
      <rect x="1" y="2" width="44" height="22" rx="6" fill="none" stroke="#a9bde0" strokeWidth="2" />
      <rect x="4" y="5" width="4" height="16" rx="2" fill="#ee5442" />
      <path d="M47 9c3 1 3 7 0 8z" fill="#a9bde0" />
    </svg>
    <svg width="24" height="26" viewBox="0 0 24 26" fill="none" stroke="#eef2f9" strokeWidth="2.800">
      <circle cx="10" cy="11" r="8.500" />
      <path d="M16 17l7 7" strokeLinecap="round" />
    </svg>
    <svg width="28" height="28" viewBox="0 0 28 28">
      <rect x="1" y="2" width="26" height="10" rx="5" fill="none" stroke="#eef2f9" strokeWidth="2.200" />
      <circle cx="7" cy="7" r="3.500" fill="#eef2f9" />
      <rect y="15" width="28" height="12" rx="6" fill="#eef2f9" />
      <circle cx="22" cy="21" r="4" fill="#4a73b9" />
    </svg>
    <svg width="28" height="28" viewBox="0 0 28 28">
      <circle cx="14" cy="14" r="14" fill="#232449" />
      <path d="M4 8a12 12 0 0120 0c-6 3-14 3-20 0z" fill="#a0467f" />
      <path d="M4 19c3 0 5-2 9-4l-3 8z" fill="#3aa5b6" />
      <path d="M14 5l1 8 9-3-8 5 5 6-6-4-1 8-1-8-7 4 6-6-8-4 9 2z" fill="#d6f3f1" />
    </svg>
  </>
);

export default function App() {
  const menus = ['文件', '编辑', '视图', '历史记录', '书签', '个人资料', '标签页', '窗口', '帮助'];
  return (
    <Desktop>
      <GlobalStyle />
      <MenuBar>
        <MenuGroup $gap={42}>
          <MenuItem aria-label="Apple"><FaApple size={32} /></MenuItem>
          <MenuItem $strong>Chrome</MenuItem>
          {menus.map((m) => (
            <MenuItem key={m}>{m}</MenuItem>
          ))}
        </MenuGroup>
        <MenuGroup $gap={36}>
          <StatusIcons />
          <Clock>11月15日 周一 下午 3:00</Clock>
        </MenuGroup>
      </MenuBar>

      <BackWindow>
        <BackTabs />
        <BackTools>
          <BackPill />
          <BackText>单</BackText>
        </BackTools>
        <BackFooter><Close s={20} w={3} /></BackFooter>
      </BackWindow>
      <LowerWindow>
        <LowerPanel><Speaker /><Film /></LowerPanel>
        <LowerPanel><Speaker /><Pip /></LowerPanel>
      </LowerWindow>

      <BrowserWindow>
        <Clip>
          <TabStrip>
            <Lights>
              <Light $c="#ee6a5f" aria-label="Close" />
              <Light $c="#f5bd4f" aria-label="Minimize" />
              <Light $c="#61c454" aria-label="Zoom" />
            </Lights>
            {tabs.map((t) => (
              <TabBox key={t.title} $active={t.active} $line={t.line}>
                {tabIcons[t.icon]}
                <TabTitle>{t.title}</TabTitle>
                <button aria-label={`Close ${t.title}`}><Close /></button>
              </TabBox>
            ))}
          </TabStrip>
          <Toolbar>
            <button aria-label="Back">
              <svg width="28" height="28" viewBox="0 0 28 28" fill="none" stroke="#5f6368" strokeWidth="2.800">
                <path d="M27 14H3M14 2L2 14l12 12" />
              </svg>
            </button>
            <button aria-label="Forward">
              <svg width="28" height="28" viewBox="0 0 28 28" fill="none" stroke="#babcbe" strokeWidth="2.800">
                <path d="M1 14h24M14 2l12 12-12 12" />
              </svg>
            </button>
            <button aria-label="Reload">
              <svg width="28" height="28" viewBox="0 0 28 28" fill="none" stroke="#5f6368" strokeWidth="3">
                <path d="M24 8A12 12 0 1025 18" />
                <path d="M27 1v11H16z" fill="#5f6368" stroke="none" />
              </svg>
            </button>
            <Omnibox>
              <svg width="17" height="24" viewBox="0 0 17 24">
                <rect y="9" width="17" height="14" rx="2" fill="#5f6368" />
                <path d="M4 10V6a4.500 4.500 0 019 0v4" fill="none" stroke="#5f6368" strokeWidth="2.400" />
              </svg>
              <UrlInput aria-label="Address" defaultValue="webassign.net/web/Student/Assignment-Responses/last?dep=27817495" />
            </Omnibox>
          </Toolbar>
          <Bookmarks>
            <BookmarkList>
              {bookmarks.map((b) => (
                <Bookmark key={b.title} href="#">{b.icon}{b.title}</Bookmark>
              ))}
            </BookmarkList>
            <ReadingList>
              <svg width="28" height="28" viewBox="0 0 28 28" fill="none" stroke="#5f6368" strokeWidth="3">
                <path d="M1.500 1.500h25v25h-25z" />
                <path d="M6 8h3M12 8h10M6 14h3M12 14h10M6 20h3M12 20h10" />
              </svg>
              阅读清单
            </ReadingList>
          </Bookmarks>

          <Question>
            <QuestionBar>
              <BarGroup $gap={40}>
                <BarTitle><span>5.</span><span>[–/3 Points]</span></BarTitle>
                <Outline>DETAILS</Outline>
                <BarTitle>UWAPRECALC1 15.P.009.</BarTitle>
              </BarGroup>
              <BarGroup $gap={16}>
                <Outline>MY NOTES</Outline>
                <Outline>ASK YOUR TEACHER</Outline>
                <Outline>PRACTICE ANOTHER</Outline>
              </BarGroup>
            </QuestionBar>
            <QuestionBody>
              <Prompt>
                Let <i>C</i><Sub><Red>7</Red></Sub> be the circle of radius <Red>7</Red> inches centered at the origin in the <i>xy</i>-coordinate
                system. Compute the areas of the shaded regions in the pictures below; the inner circle in the second
                picture is the unit circle. (Round your answers to two decimal places.)
              </Prompt>
              <Figure $top={22}><Graph /></Figure>
              <AnswerRow>
                <label htmlFor="a1"><i>A</i><Sub>1</Sub> =</label>
                <AnswerInput id="a1" />
                <Unit>in<Sup>2</Sup></Unit>
              </AnswerRow>
              <Figure $top={67}><Graph second /></Figure>
            </QuestionBody>
          </Question>
        </Clip>
      </BrowserWindow>

      <Dock />

      <Notice>
        <NoticeHead>
          <svg width="24" height="42" viewBox="0 0 24 42">
            <rect x="4" y="5" width="19" height="34" rx="4" fill="none" stroke="#8a8b8e" strokeWidth="2" />
            <path d="M9 4c0-4 9-4 9 0z" fill="#8a8b8e" />
            <rect x="6" y="33" width="15" height="4" fill="#ee4f38" />
            <path d="M-1 33l4 3-4 3z" fill="#333" />
          </svg>
          电池电量不足
          <NoticeTime>下午 12:58</NoticeTime>
        </NoticeHead>
        <NoticeText>请插入电源插座，否则 Mac 将很快进入睡眠。</NoticeText>
      </Notice>
    </Desktop>
  );
}
